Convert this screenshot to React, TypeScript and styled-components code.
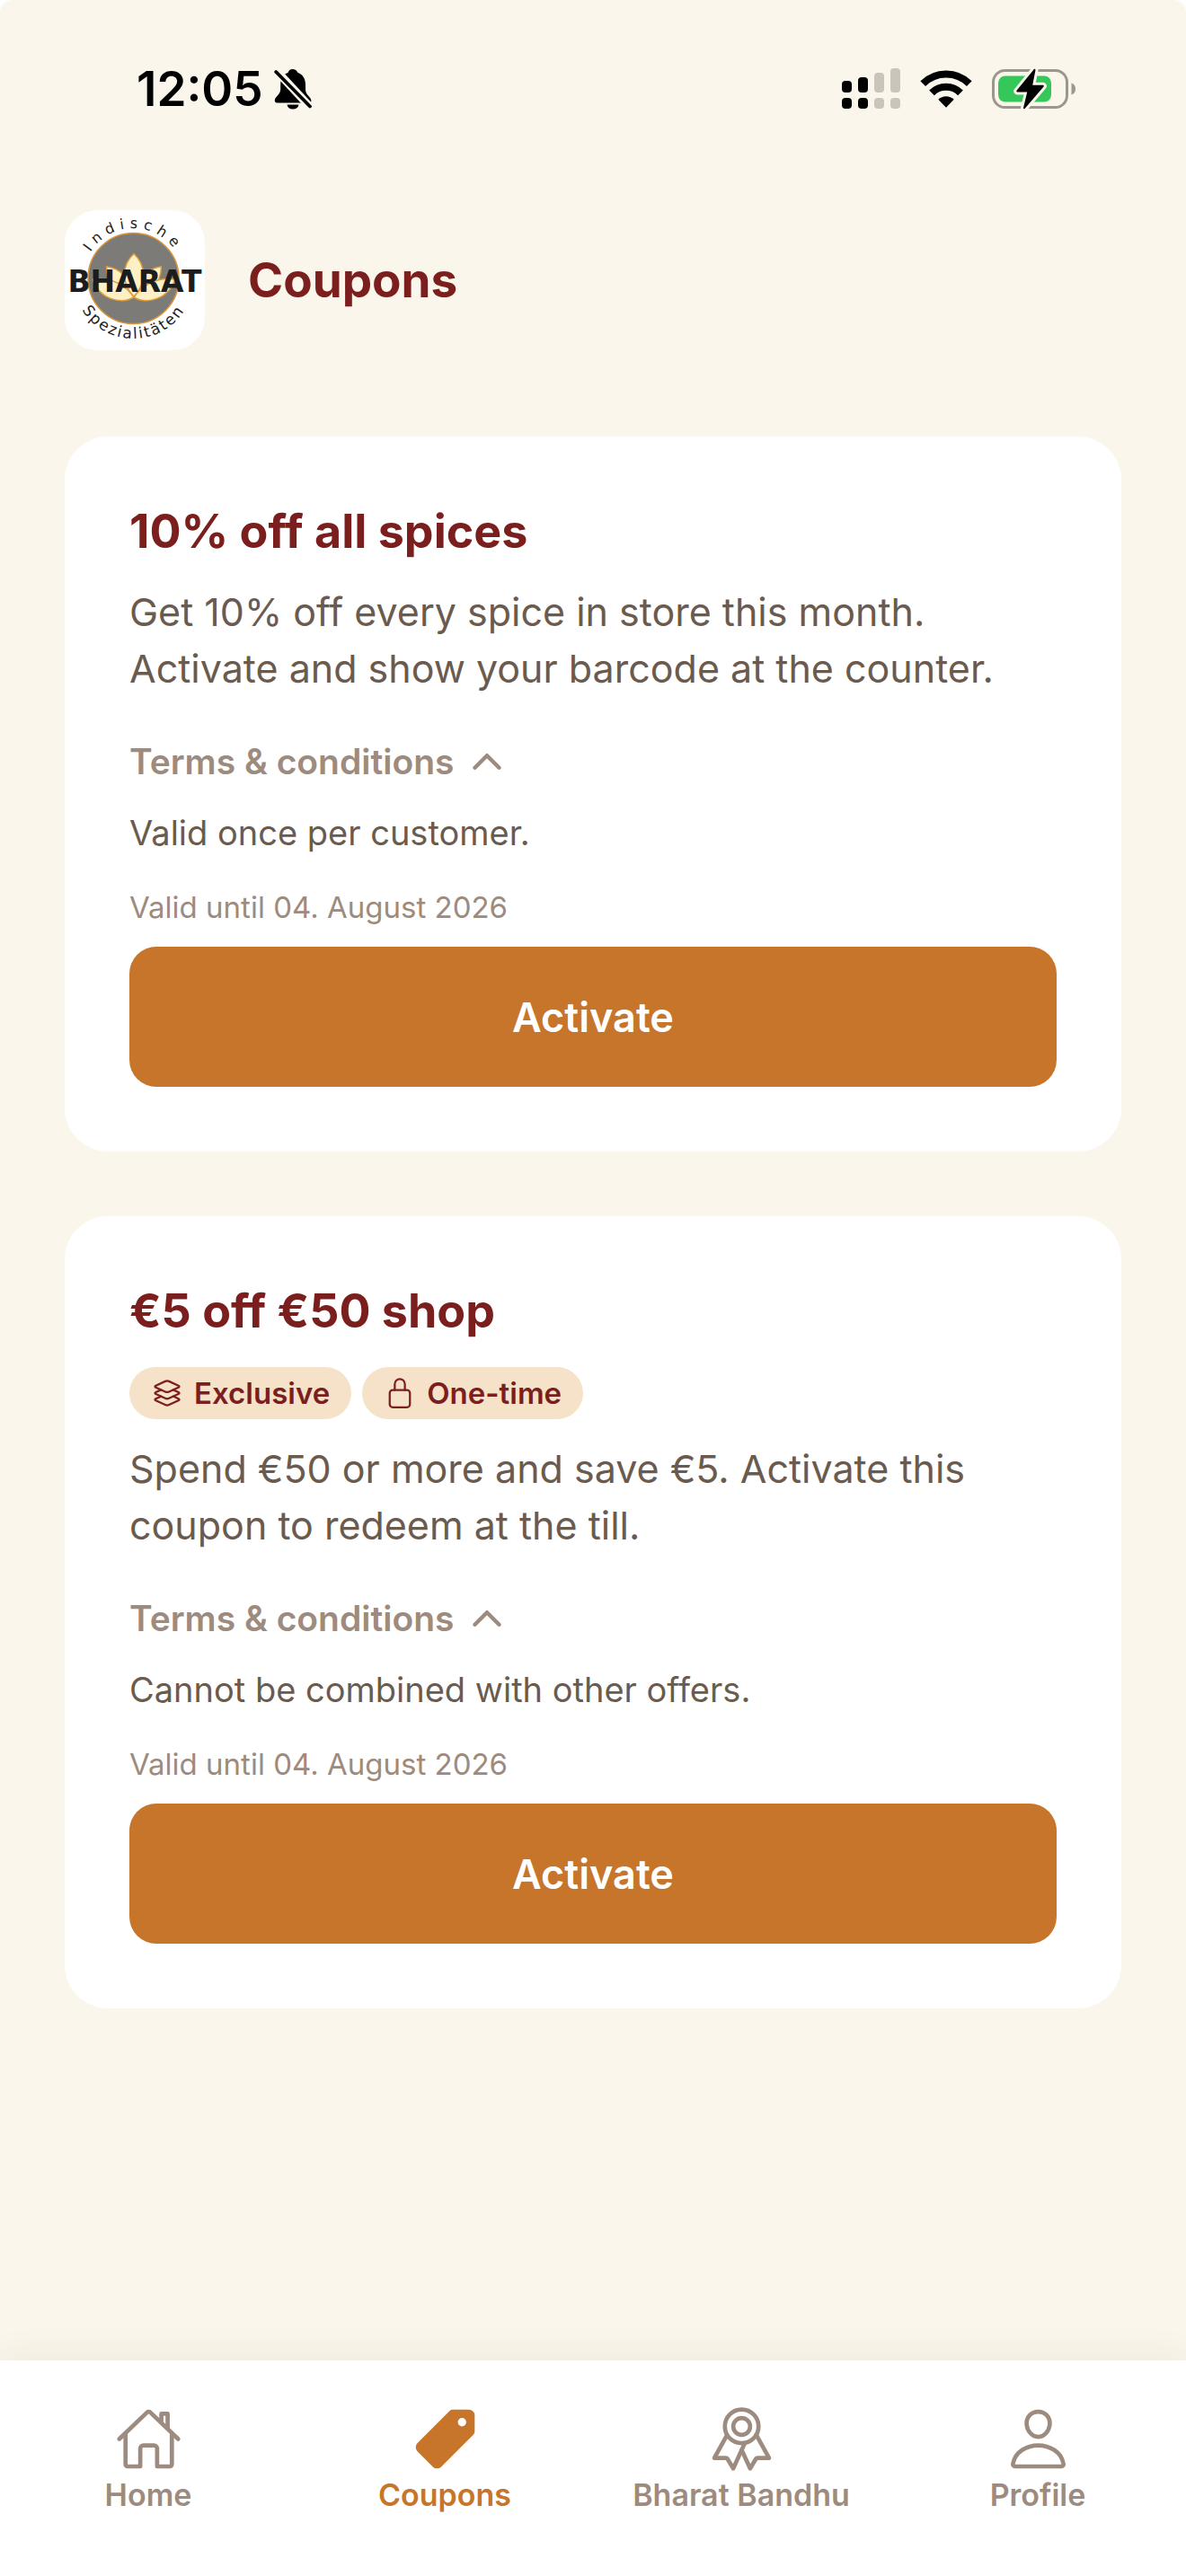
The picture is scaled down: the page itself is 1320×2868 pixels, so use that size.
import { useState } from "react";
import styled, { createGlobalStyle } from "styled-components";
import {
	IoChevronDown,
	IoChevronUp,
	IoHomeOutline,
	IoLayersOutline,
	IoLockClosedOutline,
	IoPersonOutline,
	IoPricetag,
	IoRibbonOutline,
} from "react-icons/io5";
import type { IconType } from "react-icons";

const GlobalStyle = createGlobalStyle`
    * {
        box-sizing: border-box;
    }
    body {
        margin: 0;
        background-color: #fff;
        font-family: Inter, "Liberation Sans", sans-serif;
    }
    h1, h2, p {
        margin: 0;
    }
    button {
        font-family: inherit;
        border: 0;
        cursor: pointer;
    }
`;

const Screen = styled.div`
    min-height: 100vh;
    display: flex;
    flex-direction: column;
    border-radius: 14px 14px 0 0;
    background-color: #faf6eb;
`;

const StatusBar = styled.div`
    display: flex;
    align-items: center;
    justify-content: space-between;
    height: 198px;
    padding: 0 122px 0 152px;
`;

const StatusGroup = styled.div<{ $gap: number }>`
    display: flex;
    align-items: center;
    gap: ${({ $gap }) => $gap}px;
`;

const Time = styled.span`
    font-size: 53px;
    line-height: 60px;
    font-weight: 600;
    color: #000;
`;

const Header = styled.header`
    display: flex;
    align-items: center;
    gap: 48px;
    padding: 36px 72px 96px;
`;

const LogoBox = styled.div`
    width: 156px;
    height: 156px;
    border-radius: 36px;
    background-color: #fff;
`;

const PageTitle = styled.h1`
    font-size: 53px;
    line-height: 66px;
    font-weight: 700;
    color: #7b1e1e;
`;

const CouponList = styled.main`
    flex: 1;
    display: flex;
    flex-direction: column;
    gap: 72px;
    padding: 0 72px 72px;
`;

const Card = styled.article`
    display: flex;
    flex-direction: column;
    align-items: flex-start;
    padding: 72px;
    border-radius: 48px;
    background-color: #fff;
`;

const CardTitle = styled.h2`
    font-size: 52px;
    line-height: 68px;
    font-weight: 700;
    color: #7b1e1e;
`;

const BadgeRow = styled.div`
    display: flex;
    gap: 12px;
    margin-top: 28px;
`;

const Badge = styled.span`
    display: flex;
    align-items: center;
    gap: 12px;
    padding: 9px 24px;
    border-radius: 30px;
    background-color: #f6e2c8;
    font-size: 33px;
    line-height: 40px;
    font-weight: 600;
    color: #7b1e1e;
`;

const Description = styled.p`
    margin-top: 24px;
    font-size: 43px;
    line-height: 63px;
    color: #6b5b4f;
`;

const TermsButton = styled.button`
    display: flex;
    align-items: center;
    gap: 12px;
    margin-top: 48px;
    padding: 0;
    background-color: transparent;
    font-size: 39px;
    line-height: 48px;
    font-weight: 600;
    color: #9c8b7e;
`;

const TermsText = styled.p`
    margin-top: 28px;
    font-size: 38px;
    line-height: 54px;
    color: #6b5b4f;
`;

const ValidUntil = styled.p`
    margin-top: 36px;
    font-size: 33px;
    line-height: 40px;
    color: #9c8b7e;
`;

const ActivateButton = styled.button`
    align-self: stretch;
    height: 156px;
    margin-top: 24px;
    border-radius: 30px;
    background-color: #c7752a;
    font-size: 45px;
    font-weight: 600;
    color: #fff;
`;

const TabBar = styled.nav`
    position: sticky;
    bottom: 0;
    display: grid;
    grid-template-columns: repeat(4, 1fr);
    height: 240px;
    padding-top: 50px;
    background-color: #fff;
    box-shadow: 0 -6px 36px rgba(60, 50, 20, 0.06);
`;

const TabLink = styled.a<{ $active: boolean }>`
    display: flex;
    flex-direction: column;
    align-items: center;
    gap: 5px;
    font-size: 34px;
    line-height: 40px;
    font-weight: 600;
    text-decoration: none;
    color: ${({ $active }) => ($active ? "#c7752a" : "#9c8b7e")};
`;

type CouponType = {
	title: string;
	badges: { label: string; icon: IconType }[];
	description: string;
	terms: string;
	validUntil: string;
};

const coupons: CouponType[] = [
	{
		title: "10% off all spices",
		badges: [],
		description: "Get 10% off every spice in store this month. Activate and show your barcode at the counter.",
		terms: "Valid once per customer.",
		validUntil: "04. August 2026",
	},
	{
		title: "€5 off €50 shop",
		badges: [
			{ label: "Exclusive", icon: IoLayersOutline },
			{ label: "One-time", icon: IoLockClosedOutline },
		],
		description: "Spend €50 or more and save €5. Activate this coupon to redeem at the till.",
		terms: "Cannot be combined with other offers.",
		validUntil: "04. August 2026",
	},
];

const tabs = [
	{ label: "Home", icon: IoHomeOutline },
	{ label: "Coupons", icon: IoPricetag },
	{ label: "Bharat Bandhu", icon: IoRibbonOutline },
	{ label: "Profile", icon: IoPersonOutline },
];

const BellOffIcon = () => (
	<svg width="42" height="46" viewBox="0 0 42 46" aria-label="Silent">
		<path d="M20.500 1c2.800 0 5 1.500 5.800 3.700 5.500 2 8.700 6.800 8.700 13.300v5.500c0 3 1.200 5 3.500 7.500 2 2 2.900 3.600 2.900 5.200 0 .9-.4 1.700-1.100 2.200H3.400C1.700 38.400.8 37.400.8 36c0-1.800 1-3.300 3-5.400 2.300-2.400 3.400-4.400 3.400-7.600v-5c0-6.500 3.100-11.300 8.500-13.300C16.300 2.500 18 1 20.500 1z" />
		<path d="M14.500 40.500h13c-.5 3.200-3 5-6.500 5s-6-1.800-6.500-5z" />
		<path d="M1 1L41 44" stroke="#faf6eb" strokeWidth="9" />
		<path d="M2.200 4L40 42.500" stroke="#000" strokeWidth="3.800" strokeLinecap="round" />
	</svg>
);

const SignalIcon = () => (
	<svg width="65" height="46" viewBox="0 0 65 46" aria-label="Signal">
		<rect x="0" y="14" width="11" height="13" rx="4" />
		<rect x="18" y="10" width="11" height="17" rx="4" />
		<rect x="0" y="33" width="11" height="12" rx="4" />
		<rect x="18" y="33" width="11" height="12" rx="4" />
		<g fill="#c9c5ba">
			<rect x="36" y="5" width="11" height="22" rx="4" />
			<rect x="54" y="0" width="11" height="27" rx="4" />
			<rect x="36" y="33" width="11" height="12" rx="4" />
			<rect x="54" y="33" width="11" height="12" rx="4" />
		</g>
	</svg>
);

const WifiIcon = () => (
	<svg width="58" height="42" viewBox="0 0 58 42" aria-label="Wi-Fi">
		<g fill="none" stroke="#000" strokeWidth="8">
			<path d="M3.200 15.200a36.500 36.500 0 0 1 51.600 0" />
			<path d="M13 25.400a22.500 22.500 0 0 1 32 0" />
		</g>
		<path d="M20.300 32.800a12.300 12.300 0 0 1 17.400 0L29 41.800z" />
	</svg>
);

const BatteryIcon = () => (
	<svg width="94" height="46" viewBox="0 0 94 46" aria-label="Battery charging">
		<rect x="1.500" y="2.500" width="82" height="41" rx="13" fill="none" stroke="#9b978f" strokeWidth="3" />
		<path d="M88.500 16.500c3 1 4.500 3.500 4.500 6.500s-1.500 5.500-4.500 6.500z" fill="#9b978f" />
		<rect x="7" y="8.500" width="59" height="29" rx="8" fill="#34c759" />
		<path
			d="M47.500 1.800L28.300 25.500h12.200L36 44.200 56.800 19.800H44z"
			stroke="#faf6eb"
			strokeWidth="8"
			strokeLinejoin="round"
		/>
		<path d="M47.500 1.800L28.300 25.500h12.200L36 44.200 56.800 19.800H44z" stroke="#000" strokeWidth="2" strokeLinejoin="round" />
	</svg>
);

const Logo = () => (
	<svg width="156" height="156" viewBox="0 0 156 156" fontFamily="DejaVu Sans, sans-serif" aria-label="Bharat Indische Spezialitäten">
		<defs>
			<path id="arcTop" d="M20.500 76a56 56 0 0 1 112 0" />
			<path id="arcBottom" d="M9.500 76a67 67 0 0 0 134 0" />
		</defs>
		<circle cx="76.500" cy="76" r="50.500" fill="#7c7b77" stroke="#d9963a" strokeWidth="1.600" />
		<g fill="#fdf0c4" stroke="#dc9c3c" strokeWidth="1.500" strokeLinejoin="round">
			<path d="M46.500 62.700c12 1.500 25 9 30.500 33-18-1-30-13-30.500-33z" />
			<path d="M107.500 62.700c-12 1.500-25 9-30.500 33 18-1 30-13 30.500-33z" />
			<path d="M77 48.500c-14 13-14 33 0 48 14-15 14-35 0-48z" />
			<path d="M31 77c18-2 34 3 46 20-14 8-38 3-46-20z" />
			<path d="M123 77c-18-2-34 3-46 20 14 8 38 3 46-20z" />
		</g>
		<g fill="#1c1c1c" textAnchor="middle">
			<text x="78" y="91" fontSize="33" fontWeight="700">BHARAT</text>
			<text fontSize="16" letterSpacing="6">
				<textPath href="#arcTop" startOffset="50%">Indische</textPath>
			</text>
			<text fontSize="17" letterSpacing="2">
				<textPath href="#arcBottom" startOffset="50%">Spezialitäten</textPath>
			</text>
		</g>
	</svg>
);

const CouponCard = ({ title, badges, description, terms, validUntil }: CouponType) => {
	const [open, setOpen] = useState(true);
	const [activated, setActivated] = useState(false);

	return <Card>
		<CardTitle>{title}</CardTitle>
		{badges.length > 0 && (
			<BadgeRow>
				{badges.map(({ label, icon: Icon }) => (
					<Badge key={label}><Icon size={36} />{label}</Badge>
				))}
			</BadgeRow>
		)}
		<Description>{description}</Description>
		<TermsButton type="button" aria-expanded={open} onClick={() => setOpen(!open)}>
			Terms &amp; conditions
			{open ? <IoChevronUp size={48} /> : <IoChevronDown size={48} />}
		</TermsButton>
		{open && <TermsText>{terms}</TermsText>}
		<ValidUntil>Valid until {validUntil}</ValidUntil>
		<ActivateButton type="button" onClick={() => setActivated(true)}>
			{activated ? "Activated" : "Activate"}
		</ActivateButton>
	</Card>;
};

const App = () => {
	const [activeTab, setActiveTab] = useState("Coupons");

	return <>
		<GlobalStyle />
		<Screen>
			<StatusBar>
				<StatusGroup $gap={12}>
					<Time>12:05</Time>
					<BellOffIcon />
				</StatusGroup>
				<StatusGroup $gap={22}>
					<SignalIcon />
					<WifiIcon />
					<BatteryIcon />
				</StatusGroup>
			</StatusBar>
			<Header>
				<LogoBox><Logo /></LogoBox>
				<PageTitle>Coupons</PageTitle>
			</Header>
			<CouponList>
				{coupons.map((coupon) => <CouponCard key={coupon.title} {...coupon} />)}
			</CouponList>
			<TabBar>
				{tabs.map(({ label, icon: Icon }) => (
					<TabLink
						key={label}
						href="#"
						$active={label === activeTab}
						aria-current={label === activeTab ? "page" : undefined}
						onClick={() => setActiveTab(label)}
					>
						<Icon size={75} />
						{label}
					</TabLink>
				))}
			</TabBar>
		</Screen>
	</>;
};

export default App;
